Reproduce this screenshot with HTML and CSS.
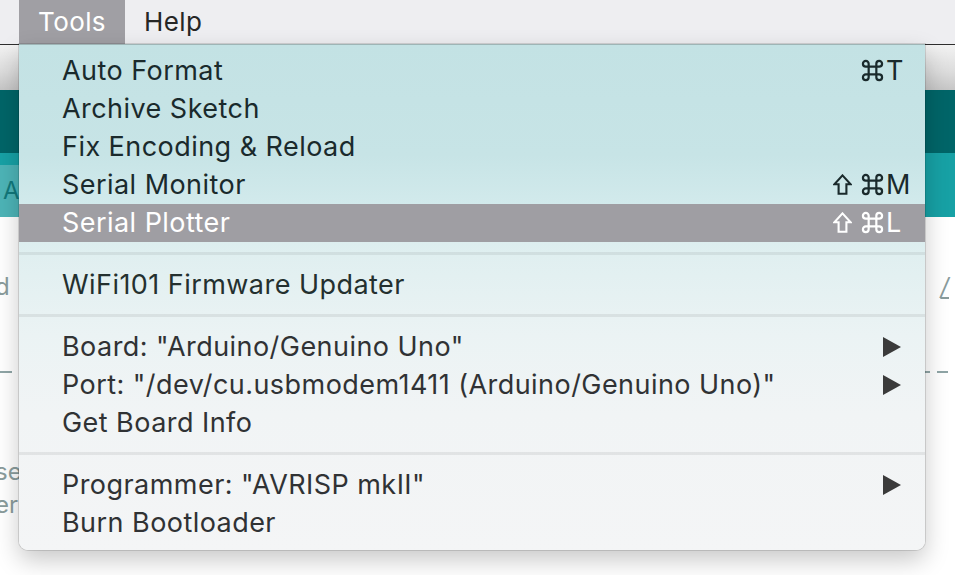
FILE: index.html
```html
<!DOCTYPE html>
<html lang="en">
<head>
<meta charset="utf-8">
<title>Tools menu</title>
<link rel="stylesheet" href="styles.css">
</head>
<body>
<div class="screen">
  <div class="menubar">
    <div class="mb-item active">Tools</div>
    <div class="mb-item">Help</div>
  </div>
  <div class="window">
    <div class="toolbar"></div>
    <div class="header"></div>
    <div class="tabs"><div class="tab">A</div></div>
    <div class="editor">
      <div class="line first"><span class="clip-left">d</span><span class="link">/</span></div>
      <div class="dashes"></div>
      <div class="line third"><span class="clip-left">se</span></div>
      <div class="line"><span class="clip-left">er</span></div>
    </div>
  </div>

  <div class="menu">
    <div class="group vib">
      <div class="mi"><span class="label">Auto Format</span><span class="sc"><span class="mods"><svg class="ic cmd" viewBox="0 0 24 24"><path d="M8 8V5A3 3 0 1 0 5 8H19A3 3 0 1 0 16 5V19A3 3 0 1 0 19 16H5A3 3 0 1 0 8 19Z"/></svg></span><span class="key">T</span></span></div>
      <div class="mi"><span class="label">Archive Sketch</span></div>
      <div class="mi"><span class="label">Fix Encoding &amp; Reload</span></div>
      <div class="mi"><span class="label">Serial Monitor</span><span class="sc"><span class="mods"><svg class="ic shift" viewBox="0 0 19 21"><path d="M9.5 1.4L17.6 10.2H13.4V19.8H5.6V10.2H1.4Z"/></svg><svg class="ic cmd" viewBox="0 0 24 24"><path d="M8 8V5A3 3 0 1 0 5 8H19A3 3 0 1 0 16 5V19A3 3 0 1 0 19 16H5A3 3 0 1 0 8 19Z"/></svg></span><span class="key">M</span></span></div>
      <div class="mi hl"><span class="label">Serial Plotter</span><span class="sc"><span class="mods"><svg class="ic shift" viewBox="0 0 19 21"><path d="M9.5 1.4L17.6 10.2H13.4V19.8H5.6V10.2H1.4Z"/></svg><svg class="ic cmd" viewBox="0 0 24 24"><path d="M8 8V5A3 3 0 1 0 5 8H19A3 3 0 1 0 16 5V19A3 3 0 1 0 19 16H5A3 3 0 1 0 8 19Z"/></svg></span><span class="key">L</span></span></div>
    </div>
    <div class="sep"></div>
    <div class="group vib2">
      <div class="mi"><span class="label">WiFi101 Firmware Updater</span></div>
    </div>
    <div class="sep"></div>
    <div class="group plain">
      <div class="mi"><span class="label">Board: "Arduino/Genuino Uno"</span><span class="arrow"></span></div>
      <div class="mi"><span class="label">Port: "/dev/cu.usbmodem1411 (Arduino/Genuino Uno)"</span><span class="arrow"></span></div>
      <div class="mi"><span class="label">Get Board Info</span></div>
    </div>
    <div class="sep"></div>
    <div class="group plain">
      <div class="mi"><span class="label">Programmer: "AVRISP mkII"</span><span class="arrow"></span></div>
      <div class="mi"><span class="label">Burn Bootloader</span></div>
    </div>
  </div>
</div>
</body>
</html>
```
FILE: styles.css
```css
* { box-sizing: border-box; }
html, body { margin: 0; padding: 0; }
body {
  width: 955px;
  height: 575px;
  overflow: hidden;
  background: #ffffff;
  font-family: "Inter", "Liberation Sans", sans-serif;
}
.screen {
  position: relative;
  width: 955px;
  height: 575px;
  overflow: hidden;
}

/* menu bar */
.menubar {
  height: 44px;
  background: #eeeef1;
  display: flex;
  padding-left: 19px;
}
.mb-item {
  padding: 0 19px;
  line-height: 44px;
  font-size: 26px;
  letter-spacing: 0.4px;
  color: #262626;
}
.mb-item.active {
  background: #a09fa4;
  color: #ffffff;
}

/* window behind */
.toolbar {
  height: 46px;
  border-top: 1px solid #2e2e2e;
  background: linear-gradient(#f2f2f2, #dcdcdc 60%, #c6c6c6);
}
.header {
  height: 63px;
  background: #006568;
}
.tabs {
  height: 64px;
  background: #17a1a5;
  padding-top: 12px;
}
.tab {
  width: 120px;
  height: 52px;
  background: #4db4b7;
  color: #12787b;
  font-size: 24px;
  line-height: 52px;
  padding-left: 3px;
}
.editor {
  padding-top: 53px;
  color: #8a9c9c;
  font-size: 24px;
}
.line {
  height: 33px;
  line-height: 33px;
  display: flex;
  justify-content: space-between;
}
.clip-left { margin-left: -5px; }
.link {
  text-decoration: underline;
  margin-right: 6px;
  padding-left: 20px;
  font-style: italic;
}
.dashes {
  margin-top: 68px;
  height: 2px;
  background: repeating-linear-gradient(90deg, #8fa5a6 0 11px, transparent 11px 18px);
  background-position: 1px 0;
}
.line.third { margin-top: 82px; }

/* dropdown menu */
.menu {
  position: absolute;
  left: 19px;
  top: 44px;
  width: 906px;
  height: 506px;
  padding: 7px 0 8px;
  border-top: 1px solid #9eb5b6;
  border-radius: 0 0 9px 9px;
  background: linear-gradient(#c3e2e4 0px, #c7e4e6 110px, #d2eaec 160px, #e0eff0 210px, #ebf3f4 290px, #f1f4f5 370px, #f4f5f6 506px);
  box-shadow: 0 10px 24px rgba(0, 0, 0, 0.22), 0 0 0 1px rgba(0, 0, 0, 0.12);
  font-size: 27px;
  letter-spacing: 0.45px;
}
.mi {
  height: 38px;
  display: flex;
  align-items: center;
  padding: 0 15px 1px 43px;
}
.label { flex: 1; white-space: nowrap; }
.vib .mi { color: #1a2a2c; }
.vib2 .mi { color: #24302f; }
.plain .mi { color: #303234; }
.mi.hl {
  background: #9f9ea3;
  color: #ffffff;
}
.sc { display: flex; align-items: center; }
.mods {
  display: flex;
  align-items: center;
  gap: 9px;
}
.ic {
  display: block;
  fill: none;
  stroke: currentColor;
}
.ic.cmd {
  width: 23px;
  height: 23px;
  stroke-width: 2.3;
}
.ic.shift {
  width: 19px;
  height: 21px;
  stroke-width: 2.1;
  stroke-linejoin: miter;
}
.key {
  width: 26px;
  padding-left: 2px;
}
.arrow {
  width: 0;
  height: 0;
  border-left: 18px solid #3b3b3b;
  border-top: 10px solid transparent;
  border-bottom: 10px solid transparent;
  margin-right: 9px;
}
.sep {
  height: 24px;
  padding-top: 10px;
}
.sep::before {
  content: "";
  display: block;
  height: 3px;
  background: rgba(0, 0, 0, 0.065);
}
```
